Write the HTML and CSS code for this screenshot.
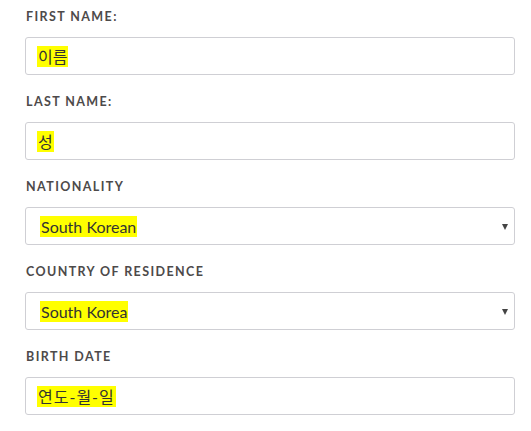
FILE: index.html
```html
<!DOCTYPE html>
<html lang="ko">
<head>
  <meta charset="UTF-8" />
  <meta name="viewport" content="width=device-width, initial-scale=1.0" />
  <title>Personal details</title>
  <link rel="stylesheet" href="styles.css">
</head>
<body>
  <form class="details-form">
    <div class="field">
      <label class="field-label">First name:</label>
      <div class="field-box"><span class="mark">이름</span></div>
    </div>

    <div class="field">
      <label class="field-label">Last name:</label>
      <div class="field-box"><span class="mark">성</span></div>
    </div>

    <div class="field">
      <label class="field-label">Nationality</label>
      <div class="field-box select-box">
        <span class="mark">South Korean</span>
        <span class="arrow"></span>
      </div>
    </div>

    <div class="field">
      <label class="field-label">Country of residence</label>
      <div class="field-box select-box">
        <span class="mark">South Korea</span>
        <span class="arrow"></span>
      </div>
    </div>

    <div class="field">
      <label class="field-label">Birth date</label>
      <div class="field-box"><span class="mark date">연도-월-일</span></div>
    </div>
  </form>
</body>
</html>
```

FILE: styles.css
```css
* {
  box-sizing: border-box;
}
body {
  margin: 0;
  padding: 0;
  background: #fff;
  font-family: Lato, "Noto Sans CJK KR", sans-serif;
}
.details-form {
  padding: 9px 0 0 25px;
  width: 515px;
}
.field {
  margin-bottom: 19px;
}
.field-label {
  display: block;
  margin: 0 0 12px 1px;
  line-height: 16px;
  font-size: 12.5px;
  font-weight: 700;
  letter-spacing: 1.4px;
  text-transform: uppercase;
  color: #4d4a4a;
}
.field-box {
  display: flex;
  align-items: center;
  height: 38px;
  padding: 0 12px 0 11px;
  border: 1px solid #cfcfd4;
  border-radius: 3px;
  font-size: 16px;
  color: #333;
}
.select-box {
  justify-content: space-between;
  padding: 0 6px 0 14px;
}
.mark {
  background: #ffff00;
  padding: 2px 1px 2px;
  line-height: 17px;
}
.select-box .mark {
  font-size: 16px;
}
.date {
  letter-spacing: 1px;
}
.arrow {
  width: 0;
  height: 0;
  margin-top: 1px;
  border-left: 3.5px solid transparent;
  border-right: 3.5px solid transparent;
  border-top: 6px solid #444;
}
```
